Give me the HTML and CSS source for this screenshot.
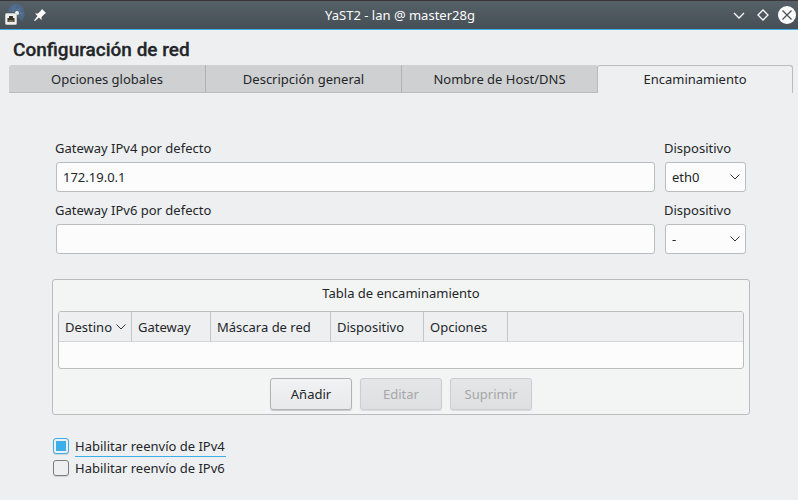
FILE: index.html
```html
<!DOCTYPE html>
<html lang="es">
<head>
<meta charset="utf-8">
<meta name="viewport" content="width=device-width, initial-scale=1">
<title>YaST2 - lan @ master28g</title>
<link rel="stylesheet" href="styles.css">
</head>
<body>
<header class="titlebar">
  <div class="titlebar-side">
    <svg class="app-icon" viewBox="0 0 22 22" aria-hidden="true">
      <path d="M4 8A8 8 0 0 1 20 7Q22 13 17 17L12 8Z" fill="#4d6886"/>
      <path d="M8 4Q14 3 18 12M6 7Q12 5 15 14M12 1Q8 4 9 8M17 4Q12 6 11 9M19 9Q15 9 12 12" fill="none" stroke="#6b84a0" stroke-width="0.5"/>
      <path d="M10 11L13 9" stroke="#dedede" stroke-width="2"/>
      <circle cx="13" cy="9" r="2" fill="#eeeeec"/>
      <rect x="1.500" y="9.500" width="11" height="11" rx="1" fill="#eeeeec" stroke="#c5c7c7"/>
      <path d="M3.500 18V14H5V12H9V14H10.500V18Z" fill="#37342c"/>
      <path d="M4.500 18V16H9.500V18Z" fill="#756c4d"/>
    </svg>
    <button class="title-button" type="button" aria-label="Fijar">
      <svg class="pin" viewBox="0 0 12 12" aria-hidden="true"><path d="M8 0L12 4L10.500 5L7.500 8V11L5 8.500L1 12L0 11.500L3.500 7L1 4.500H4L7 1.500Z" fill="#fcfcfc"/></svg>
    </button>
  </div>
  <div class="window-title">YaST2 - lan @ master28g</div>
  <div class="titlebar-side titlebar-end">
    <button class="title-button" type="button" aria-label="Minimizar"><svg class="control" viewBox="0 0 18 18" aria-hidden="true"><path d="M4 7L9 12L14 7" fill="none" stroke="#fcfcfc" stroke-width="1.300"/></svg></button>
    <button class="title-button" type="button" aria-label="Maximizar"><svg class="control" viewBox="0 0 18 18" aria-hidden="true"><path d="M4 9L9 4L14 9L9 14Z" fill="none" stroke="#fcfcfc" stroke-width="1.300"/></svg></button>
    <button class="title-button" type="button" aria-label="Cerrar"><svg class="control" viewBox="0 0 18 18" aria-hidden="true"><circle cx="9" cy="9" r="9" fill="#fcfcfc"/><path d="M4.500 4.500L13.500 13.500M13.500 4.500L4.500 13.500" stroke="#475057" stroke-width="1.300"/></svg></button>
  </div>
</header>
<main class="content">
  <h1 class="heading">Configuración de red</h1>
  <div class="tabs" role="tablist">
    <button class="tab" type="button" role="tab" aria-selected="false">Opciones globales</button>
    <button class="tab" type="button" role="tab" aria-selected="false">Descripción general</button>
    <button class="tab" type="button" role="tab" aria-selected="false">Nombre de Host/DNS</button>
    <button class="tab tab-active" type="button" role="tab" aria-selected="true">Encaminamiento</button>
  </div>
  <div class="panel" role="tabpanel">
    <div class="gateways">
      <div class="field">
        <label for="gw4">Gateway IPv4 por defecto</label>
        <input class="control-box" id="gw4" type="text" value="172.19.0.1">
      </div>
      <div class="field">
        <label for="dev4">Dispositivo</label>
        <div class="select-wrap">
          <select class="control-box" id="dev4"><option>eth0</option></select>
          <svg class="chevron" viewBox="0 0 10 6" aria-hidden="true"><path d="M0.500 0.500L5 5L9.500 0.500"/></svg>
        </div>
      </div>
      <div class="field">
        <label for="gw6">Gateway IPv6 por defecto</label>
        <input class="control-box" id="gw6" type="text" value="">
      </div>
      <div class="field">
        <label for="dev6">Dispositivo</label>
        <div class="select-wrap">
          <select class="control-box" id="dev6"><option>-</option></select>
          <svg class="chevron" viewBox="0 0 10 6" aria-hidden="true"><path d="M0.500 0.500L5 5L9.500 0.500"/></svg>
        </div>
      </div>
    </div>
    <section class="routing">
      <h2 class="routing-title" id="routing-title">Tabla de encaminamiento</h2>
      <div class="table-frame">
        <table class="routes" aria-labelledby="routing-title">
          <colgroup><col class="col-dest"><col class="col-gateway"><col class="col-mask"><col class="col-device"><col class="col-options"><col></colgroup>
          <thead>
            <tr>
              <th>Destino<svg class="chevron sort" viewBox="0 0 10 6" aria-hidden="true"><path d="M0.500 0.500L5 5L9.500 0.500"/></svg></th>
              <th>Gateway</th><th>Máscara de red</th><th>Dispositivo</th><th>Opciones</th><td></td>
            </tr>
          </thead>
          <tbody><tr><td colspan="6"></td></tr></tbody>
        </table>
      </div>
      <div class="actions">
        <button class="button" type="button">Añadir</button>
        <button class="button" type="button" disabled>Editar</button>
        <button class="button" type="button" disabled>Suprimir</button>
      </div>
    </section>
    <div class="checks">
      <label class="check"><input type="checkbox" checked><span class="check-text check-focus">Habilitar reenvío de IPv4</span></label>
      <label class="check"><input type="checkbox"><span class="check-text">Habilitar reenvío de IPv6</span></label>
    </div>
  </div>
</main>
</body>
</html>
```
FILE: styles.css
```css
* {
  box-sizing: border-box;
}

body {
  margin: 0;
  min-height: 100vh;
  background: #eeeff1;
  color: #232629;
  font: 13px/18px "Noto Sans", sans-serif;
}

button,
input,
select {
  margin: 0;
  color: inherit;
  font: inherit;
}

svg {
  display: block;
}

.titlebar {
  display: grid;
  grid-template-columns: 1fr auto 1fr;
  align-items: center;
  height: 30px;
  padding: 0 2px 0 4px;
  border-top: 1px solid #3a3538;
  border-bottom: 1px solid #3daee9;
  background: linear-gradient(#566067, #464f56);
  color: #fcfcfc;
}

.titlebar-side {
  display: flex;
  align-items: center;
  gap: 8px;
}

.titlebar-end {
  justify-content: flex-end;
  gap: 6px;
}

.title-button {
  padding: 0;
  border: 0;
  background: none;
}

.app-icon {
  width: 22px;
  height: 22px;
}

.pin {
  width: 12px;
  height: 12px;
}

.control {
  width: 18px;
  height: 18px;
}

.content {
  padding: 8px 5px 0 9px;
}

.heading {
  margin: 0 0 4px 4px;
  font: 500 19px/23px Roboto, sans-serif;
  -webkit-text-stroke: 0.3px currentColor;
}

.tabs {
  display: grid;
  grid-template-columns: 197fr 196fr 195fr 196fr;
}

.tab {
  height: 28px;
  padding: 0;
  border: 0;
  border-right: 1px solid #afb1b3;
  border-bottom: 1px solid #b9bbbd;
  background: #cfd0d2;
}

.tab:first-child {
  border-top-left-radius: 3px;
}

.tab:nth-child(3) {
  border-right: 0;
}

.tab-active {
  padding-bottom: 1px;
  border: 1px solid #b9bbbd;
  border-bottom: 0;
  border-radius: 3px 3px 0 0;
  background: #eeeff1;
}

.panel {
  padding: 46px 43px 0;
}

.gateways {
  display: grid;
  grid-template-columns: 1fr 81px;
  gap: 9px 10px;
  padding: 0 4px;
}

.field {
  display: grid;
  gap: 5px;
}

.field label {
  margin-left: -1px;
}

.control-box {
  display: block;
  width: 100%;
  height: 30px;
  padding: 0 6px;
  border: 1px solid #bbbcbe;
  border-radius: 3px;
  background: #fcfcfc;
  appearance: none;
}

.select-wrap {
  position: relative;
}

.select-wrap .chevron {
  position: absolute;
  top: 12px;
  right: 6px;
  pointer-events: none;
}

.chevron {
  width: 10px;
  height: 6px;
  fill: none;
  stroke: #31363b;
}

.routing {
  margin-top: 25px;
  padding: 4px 5px;
  border: 1px solid #bbbcbe;
  border-radius: 3px;
  background: #f3f5f4;
}

.routing-title {
  margin: 0 0 9px;
  font: inherit;
  text-align: center;
}

.table-frame {
  overflow: hidden;
  border: 1px solid #bbbcbe;
  border-radius: 3px;
  background: #fcfcfc;
}

.routes {
  width: 100%;
  border-collapse: separate;
  border-spacing: 0;
  table-layout: fixed;
}

.col-dest {
  width: 73px;
}

.col-gateway {
  width: 79px;
}

.col-mask {
  width: 120px;
}

.col-device {
  width: 93px;
}

.col-options {
  width: 84px;
}

.routes th,
.routes td {
  height: 26px;
  padding: 0 6px;
  font-weight: normal;
  text-align: left;
  white-space: nowrap;
}

.routes thead th,
.routes thead td {
  height: 30px;
  border-bottom: 1px solid #d5d6d7;
  background: #eeeff1;
}

.routes thead th {
  border-right: 1px solid #c4c5c7;
}

.sort {
  display: inline-block;
  margin-left: 4px;
  vertical-align: 2px;
}

.actions {
  display: flex;
  justify-content: center;
  gap: 8px;
  margin-top: 9px;
}

.button {
  width: 82px;
  height: 32px;
  padding: 0;
  border: 1px solid #b0b2b4;
  border-radius: 3px;
  background: linear-gradient(#f1f2f3, #e8e9eb);
  box-shadow: 0 1px 1px #c5c7c8;
}

.button:disabled {
  border-color: #cbcdce;
  background: linear-gradient(#e5e6e7, #dedfe1);
  box-shadow: 0 1px 1px #d9dbdc;
  color: #a5a7a9;
}

.checks {
  display: grid;
  justify-items: start;
  gap: 2px;
  margin: 21px 0 0 1px;
}

.check {
  display: flex;
  align-items: center;
  gap: 6px;
  height: 20px;
}

.check input {
  width: 16px;
  height: 16px;
  border: 1px solid #7b7e81;
  border-radius: 3px;
  box-shadow: 0 1px 1px #d0d1d3;
  appearance: none;
}

.check input:checked {
  padding: 2px;
  border-color: #3daee9;
  background: #3daee9 content-box;
}

.check-text {
  padding-right: 1px;
  border-bottom: 1px solid transparent;
  line-height: 20px;
}

.check-focus {
  border-bottom-color: #3daee9;
}
```
